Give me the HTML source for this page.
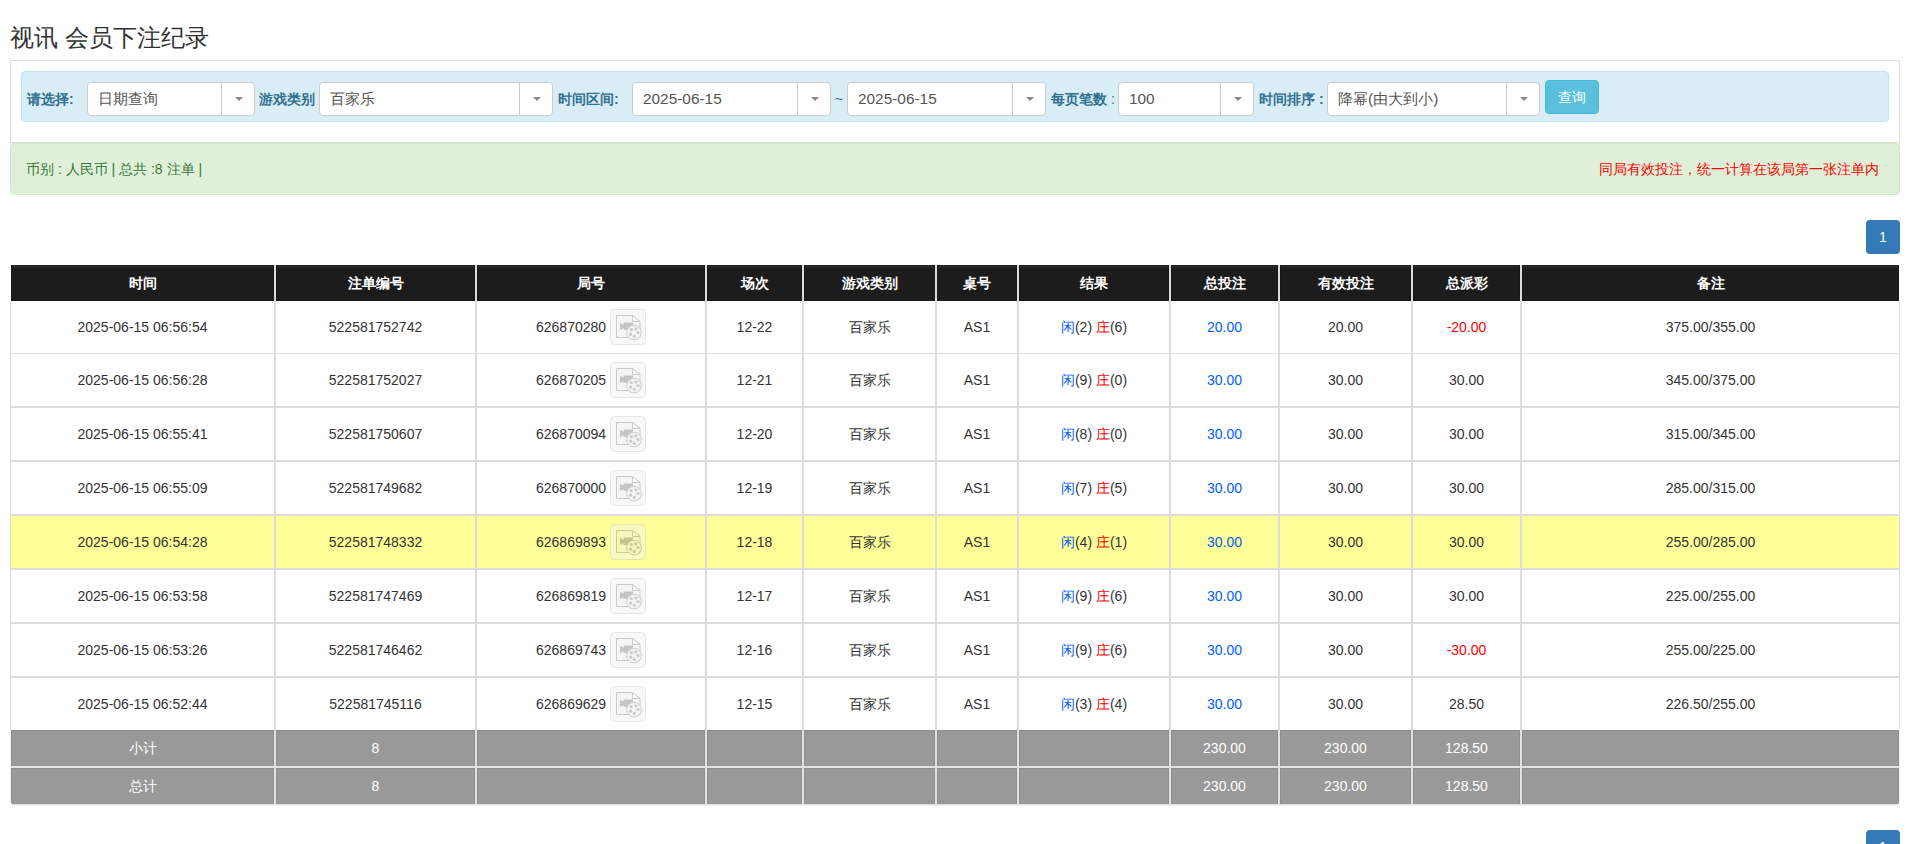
<!DOCTYPE html>
<html><head><meta charset="utf-8"><title>视讯 会员下注纪录</title>
<style>
html,body{margin:0;padding:0;background:#fff;}
body{width:1910px;height:844px;overflow:hidden;position:relative;font-family:"Liberation Sans",sans-serif;color:#333;font-size:14px;}
.abs{position:absolute;}
h3{position:absolute;left:10px;top:23px;margin:0;font-size:24px;font-weight:normal;line-height:30px;color:#333;white-space:nowrap;}
.panel{position:absolute;left:10px;top:60px;width:1888px;height:81px;border:1px solid #ddd;background:#fff;}
.info{position:absolute;left:21px;top:71px;width:1866px;height:49px;border:1px solid #bce8f1;background:#d9edf7;border-radius:4px;}
.lab{position:absolute;top:89px;font-size:14px;font-weight:bold;color:#31708f;line-height:20px;white-space:nowrap;}
.lab i{font-style:normal;font-weight:normal;}
.sel{position:absolute;top:82px;height:32px;border:1px solid #ccc;border-radius:4px;background:#fff;}
.sel .t{position:absolute;left:10px;top:0;line-height:32px;font-size:15.4px;color:#555;white-space:nowrap;}
.sel .dd{position:absolute;right:0;top:0;width:32px;height:32px;border-left:1px solid #ccc;}
.sel .dd:after{content:"";position:absolute;left:13px;top:14px;border-left:4px solid transparent;border-right:4px solid transparent;border-top:4px solid #888;}
.btn{position:absolute;left:1545px;top:80px;width:52px;height:32px;border:1px solid #46b8da;background:#5bc0de;border-radius:4px;color:#fff;font-size:14px;line-height:32px;text-align:center;}
.alert{position:absolute;left:10px;top:143px;width:1888px;height:50px;border:1px solid #d6e9c6;background:#dff0d8;border-radius:4px;}
.alert .l{position:absolute;left:15px;top:0;line-height:50px;font-size:14px;color:#3c763d;white-space:nowrap;}
.alert .rt{position:absolute;right:20px;top:0;line-height:50px;font-size:14px;color:#f00;white-space:nowrap;}
.pg{position:absolute;left:1866px;width:34px;height:34px;background:#337ab7;border-radius:4px;color:#fff;text-align:center;line-height:34px;font-size:14px;}
.th{position:absolute;top:265px;height:34px;line-height:36px;background:linear-gradient(#1e1e1e 0,#2a2a2a 1px,#262626 2px,#1c1c1c 4px);border:1px solid #191919;border-top:0;box-sizing:border-box;height:36px;color:#fff;font-weight:bold;font-size:14px;text-align:center;white-space:nowrap;}
.hsep{position:absolute;top:265px;width:2px;height:36px;background:#dcdcdc;}
.c{position:absolute;text-align:center;white-space:nowrap;font-size:14px;color:#333;}
.c .ic{vertical-align:middle;position:relative;top:-1px;}
.b{color:#0060ff;}
.r{color:#f00;}
.hl{position:absolute;background:#ffff99;}
.bl{position:absolute;background:#dcdcdc;}
.tf{position:absolute;background:#999;border:1px solid #8f8f8f;border-bottom:0;box-sizing:border-box;color:#fff;font-size:14px;text-align:center;white-space:nowrap;}
.fshadow{position:absolute;left:11px;top:730px;width:1888px;height:74px;border-radius:0 0 3px 3px;box-shadow:0 1px 2px rgba(0,0,0,.18);background:#999;}
.fsep{position:absolute;width:2px;background:#e2e2e2;}
</style></head><body>
<h3>视讯 会员下注纪录</h3>
<div class="panel"></div>
<div class="info"></div>
<div class="lab" style="left:27px">请选择:</div>
<div class="sel" style="left:87px;width:166px"><span class="t">日期查询</span><span class="dd"></span></div>
<div class="lab" style="left:259px">游戏类别</div>
<div class="sel" style="left:319px;width:232px"><span class="t">百家乐</span><span class="dd"></span></div>
<div class="lab" style="left:558px">时间区间:</div>
<div class="sel" style="left:632px;width:197px"><span class="t">2025-06-15</span><span class="dd"></span></div>
<div class="lab" style="left:835px"><i>~</i></div>
<div class="sel" style="left:847px;width:197px"><span class="t">2025-06-15</span><span class="dd"></span></div>
<div class="lab" style="left:1051px">每页笔数<i> :</i></div>
<div class="sel" style="left:1118px;width:134px"><span class="t">100</span><span class="dd"></span></div>
<div class="lab" style="left:1259px">时间排序 :</div>
<div class="sel" style="left:1327px;width:211px"><span class="t">降幂(由大到小)</span><span class="dd"></span></div>
<div class="btn">查询</div>
<div class="alert"><span class="l">币别 : 人民币 | 总共 :8 注单 |</span><span class="rt">同局有效投注，统一计算在该局第一张注单内</span></div>
<div class="pg" style="top:220px">1</div>
<div class="th" style="left:11px;width:263px">时间</div>
<div class="th" style="left:276px;width:199px">注单编号</div>
<div class="th" style="left:477px;width:228px">局号</div>
<div class="th" style="left:707px;width:95px">场次</div>
<div class="th" style="left:804px;width:131px">游戏类别</div>
<div class="th" style="left:937px;width:80px">桌号</div>
<div class="th" style="left:1019px;width:150px">结果</div>
<div class="th" style="left:1171px;width:107px">总投注</div>
<div class="th" style="left:1280px;width:131px">有效投注</div>
<div class="th" style="left:1413px;width:107px">总派彩</div>
<div class="th" style="left:1522px;width:377px">备注</div>
<div class="hsep" style="left:274px"></div>
<div class="hsep" style="left:475px"></div>
<div class="hsep" style="left:705px"></div>
<div class="hsep" style="left:802px"></div>
<div class="hsep" style="left:935px"></div>
<div class="hsep" style="left:1017px"></div>
<div class="hsep" style="left:1169px"></div>
<div class="hsep" style="left:1278px"></div>
<div class="hsep" style="left:1411px"></div>
<div class="hsep" style="left:1520px"></div>
<div class="c " style="left:11px;top:301px;width:263px;height:52px;line-height:52px">2025-06-15 06:56:54</div>
<div class="c " style="left:276px;top:301px;width:199px;height:52px;line-height:52px">522581752742</div>
<div class="c " style="left:477px;top:301px;width:228px;height:52px;line-height:52px">626870280 <svg class="ic" width="36" height="36" viewBox="0 0 36 36" style="opacity:.46"><rect x="0.5" y="0.5" width="35" height="35" rx="4" fill="#f0f0f0" stroke="#c9c9c9"/><path d="M6.5 6.5H22.5L30 12.5V28.5H6.5Z" fill="#ebebeb" stroke="#8e8e8e"/><path d="M22.5 6.5V12.5H30Z" fill="#fafafa" stroke="#8e8e8e" stroke-linejoin="round"/><path d="M10 14L14 16V19L10 21Z" fill="#838383"/><rect x="13.5" y="13.5" width="9.5" height="7.5" fill="#838383"/><circle cx="24" cy="23.6" r="7.3" fill="#ebebeb" stroke="#8e8e8e"/><circle cx="21.4" cy="20.6" r="1.6" fill="#8c8c8c"/><circle cx="25.8" cy="19.8" r="1.6" fill="#8c8c8c"/><circle cx="28" cy="23.5" r="1.6" fill="#8c8c8c"/><circle cx="20.6" cy="25.2" r="1.6" fill="#8c8c8c"/><circle cx="24.4" cy="27.3" r="1.6" fill="#8c8c8c"/></svg></div>
<div class="c " style="left:707px;top:301px;width:95px;height:52px;line-height:52px">12-22</div>
<div class="c " style="left:804px;top:301px;width:131px;height:52px;line-height:52px">百家乐</div>
<div class="c " style="left:937px;top:301px;width:80px;height:52px;line-height:52px">AS1</div>
<div class="c " style="left:1019px;top:301px;width:150px;height:52px;line-height:52px"><span class="b">闲</span>(2) <span class="r">庄</span>(6)</div>
<div class="c " style="left:1171px;top:301px;width:107px;height:52px;line-height:52px"><span class="b">20.00</span></div>
<div class="c " style="left:1280px;top:301px;width:131px;height:52px;line-height:52px">20.00</div>
<div class="c " style="left:1413px;top:301px;width:107px;height:52px;line-height:52px"><span class="r">-20.00</span></div>
<div class="c " style="left:1522px;top:301px;width:377px;height:52px;line-height:52px">375.00/355.00</div>
<div class="c " style="left:11px;top:354px;width:263px;height:52px;line-height:52px">2025-06-15 06:56:28</div>
<div class="c " style="left:276px;top:354px;width:199px;height:52px;line-height:52px">522581752027</div>
<div class="c " style="left:477px;top:354px;width:228px;height:52px;line-height:52px">626870205 <svg class="ic" width="36" height="36" viewBox="0 0 36 36" style="opacity:.46"><rect x="0.5" y="0.5" width="35" height="35" rx="4" fill="#f0f0f0" stroke="#c9c9c9"/><path d="M6.5 6.5H22.5L30 12.5V28.5H6.5Z" fill="#ebebeb" stroke="#8e8e8e"/><path d="M22.5 6.5V12.5H30Z" fill="#fafafa" stroke="#8e8e8e" stroke-linejoin="round"/><path d="M10 14L14 16V19L10 21Z" fill="#838383"/><rect x="13.5" y="13.5" width="9.5" height="7.5" fill="#838383"/><circle cx="24" cy="23.6" r="7.3" fill="#ebebeb" stroke="#8e8e8e"/><circle cx="21.4" cy="20.6" r="1.6" fill="#8c8c8c"/><circle cx="25.8" cy="19.8" r="1.6" fill="#8c8c8c"/><circle cx="28" cy="23.5" r="1.6" fill="#8c8c8c"/><circle cx="20.6" cy="25.2" r="1.6" fill="#8c8c8c"/><circle cx="24.4" cy="27.3" r="1.6" fill="#8c8c8c"/></svg></div>
<div class="c " style="left:707px;top:354px;width:95px;height:52px;line-height:52px">12-21</div>
<div class="c " style="left:804px;top:354px;width:131px;height:52px;line-height:52px">百家乐</div>
<div class="c " style="left:937px;top:354px;width:80px;height:52px;line-height:52px">AS1</div>
<div class="c " style="left:1019px;top:354px;width:150px;height:52px;line-height:52px"><span class="b">闲</span>(9) <span class="r">庄</span>(0)</div>
<div class="c " style="left:1171px;top:354px;width:107px;height:52px;line-height:52px"><span class="b">30.00</span></div>
<div class="c " style="left:1280px;top:354px;width:131px;height:52px;line-height:52px">30.00</div>
<div class="c " style="left:1413px;top:354px;width:107px;height:52px;line-height:52px">30.00</div>
<div class="c " style="left:1522px;top:354px;width:377px;height:52px;line-height:52px">345.00/375.00</div>
<div class="c " style="left:11px;top:408px;width:263px;height:52px;line-height:52px">2025-06-15 06:55:41</div>
<div class="c " style="left:276px;top:408px;width:199px;height:52px;line-height:52px">522581750607</div>
<div class="c " style="left:477px;top:408px;width:228px;height:52px;line-height:52px">626870094 <svg class="ic" width="36" height="36" viewBox="0 0 36 36" style="opacity:.46"><rect x="0.5" y="0.5" width="35" height="35" rx="4" fill="#f0f0f0" stroke="#c9c9c9"/><path d="M6.5 6.5H22.5L30 12.5V28.5H6.5Z" fill="#ebebeb" stroke="#8e8e8e"/><path d="M22.5 6.5V12.5H30Z" fill="#fafafa" stroke="#8e8e8e" stroke-linejoin="round"/><path d="M10 14L14 16V19L10 21Z" fill="#838383"/><rect x="13.5" y="13.5" width="9.5" height="7.5" fill="#838383"/><circle cx="24" cy="23.6" r="7.3" fill="#ebebeb" stroke="#8e8e8e"/><circle cx="21.4" cy="20.6" r="1.6" fill="#8c8c8c"/><circle cx="25.8" cy="19.8" r="1.6" fill="#8c8c8c"/><circle cx="28" cy="23.5" r="1.6" fill="#8c8c8c"/><circle cx="20.6" cy="25.2" r="1.6" fill="#8c8c8c"/><circle cx="24.4" cy="27.3" r="1.6" fill="#8c8c8c"/></svg></div>
<div class="c " style="left:707px;top:408px;width:95px;height:52px;line-height:52px">12-20</div>
<div class="c " style="left:804px;top:408px;width:131px;height:52px;line-height:52px">百家乐</div>
<div class="c " style="left:937px;top:408px;width:80px;height:52px;line-height:52px">AS1</div>
<div class="c " style="left:1019px;top:408px;width:150px;height:52px;line-height:52px"><span class="b">闲</span>(8) <span class="r">庄</span>(0)</div>
<div class="c " style="left:1171px;top:408px;width:107px;height:52px;line-height:52px"><span class="b">30.00</span></div>
<div class="c " style="left:1280px;top:408px;width:131px;height:52px;line-height:52px">30.00</div>
<div class="c " style="left:1413px;top:408px;width:107px;height:52px;line-height:52px">30.00</div>
<div class="c " style="left:1522px;top:408px;width:377px;height:52px;line-height:52px">315.00/345.00</div>
<div class="c " style="left:11px;top:462px;width:263px;height:52px;line-height:52px">2025-06-15 06:55:09</div>
<div class="c " style="left:276px;top:462px;width:199px;height:52px;line-height:52px">522581749682</div>
<div class="c " style="left:477px;top:462px;width:228px;height:52px;line-height:52px">626870000 <svg class="ic" width="36" height="36" viewBox="0 0 36 36" style="opacity:.46"><rect x="0.5" y="0.5" width="35" height="35" rx="4" fill="#f0f0f0" stroke="#c9c9c9"/><path d="M6.5 6.5H22.5L30 12.5V28.5H6.5Z" fill="#ebebeb" stroke="#8e8e8e"/><path d="M22.5 6.5V12.5H30Z" fill="#fafafa" stroke="#8e8e8e" stroke-linejoin="round"/><path d="M10 14L14 16V19L10 21Z" fill="#838383"/><rect x="13.5" y="13.5" width="9.5" height="7.5" fill="#838383"/><circle cx="24" cy="23.6" r="7.3" fill="#ebebeb" stroke="#8e8e8e"/><circle cx="21.4" cy="20.6" r="1.6" fill="#8c8c8c"/><circle cx="25.8" cy="19.8" r="1.6" fill="#8c8c8c"/><circle cx="28" cy="23.5" r="1.6" fill="#8c8c8c"/><circle cx="20.6" cy="25.2" r="1.6" fill="#8c8c8c"/><circle cx="24.4" cy="27.3" r="1.6" fill="#8c8c8c"/></svg></div>
<div class="c " style="left:707px;top:462px;width:95px;height:52px;line-height:52px">12-19</div>
<div class="c " style="left:804px;top:462px;width:131px;height:52px;line-height:52px">百家乐</div>
<div class="c " style="left:937px;top:462px;width:80px;height:52px;line-height:52px">AS1</div>
<div class="c " style="left:1019px;top:462px;width:150px;height:52px;line-height:52px"><span class="b">闲</span>(7) <span class="r">庄</span>(5)</div>
<div class="c " style="left:1171px;top:462px;width:107px;height:52px;line-height:52px"><span class="b">30.00</span></div>
<div class="c " style="left:1280px;top:462px;width:131px;height:52px;line-height:52px">30.00</div>
<div class="c " style="left:1413px;top:462px;width:107px;height:52px;line-height:52px">30.00</div>
<div class="c " style="left:1522px;top:462px;width:377px;height:52px;line-height:52px">285.00/315.00</div>
<div class="hl" style="left:11px;top:516px;width:1888px;height:52px"></div>
<div class="c " style="left:11px;top:516px;width:263px;height:52px;line-height:52px">2025-06-15 06:54:28</div>
<div class="c " style="left:276px;top:516px;width:199px;height:52px;line-height:52px">522581748332</div>
<div class="c " style="left:477px;top:516px;width:228px;height:52px;line-height:52px">626869893 <svg class="ic" width="36" height="36" viewBox="0 0 36 36" style="opacity:.46"><rect x="0.5" y="0.5" width="35" height="35" rx="4" fill="#f0f0f0" stroke="#c9c9c9"/><path d="M6.5 6.5H22.5L30 12.5V28.5H6.5Z" fill="#ebebeb" stroke="#8e8e8e"/><path d="M22.5 6.5V12.5H30Z" fill="#fafafa" stroke="#8e8e8e" stroke-linejoin="round"/><path d="M10 14L14 16V19L10 21Z" fill="#838383"/><rect x="13.5" y="13.5" width="9.5" height="7.5" fill="#838383"/><circle cx="24" cy="23.6" r="7.3" fill="#ebebeb" stroke="#8e8e8e"/><circle cx="21.4" cy="20.6" r="1.6" fill="#8c8c8c"/><circle cx="25.8" cy="19.8" r="1.6" fill="#8c8c8c"/><circle cx="28" cy="23.5" r="1.6" fill="#8c8c8c"/><circle cx="20.6" cy="25.2" r="1.6" fill="#8c8c8c"/><circle cx="24.4" cy="27.3" r="1.6" fill="#8c8c8c"/></svg></div>
<div class="c " style="left:707px;top:516px;width:95px;height:52px;line-height:52px">12-18</div>
<div class="c " style="left:804px;top:516px;width:131px;height:52px;line-height:52px">百家乐</div>
<div class="c " style="left:937px;top:516px;width:80px;height:52px;line-height:52px">AS1</div>
<div class="c " style="left:1019px;top:516px;width:150px;height:52px;line-height:52px"><span class="b">闲</span>(4) <span class="r">庄</span>(1)</div>
<div class="c " style="left:1171px;top:516px;width:107px;height:52px;line-height:52px"><span class="b">30.00</span></div>
<div class="c " style="left:1280px;top:516px;width:131px;height:52px;line-height:52px">30.00</div>
<div class="c " style="left:1413px;top:516px;width:107px;height:52px;line-height:52px">30.00</div>
<div class="c " style="left:1522px;top:516px;width:377px;height:52px;line-height:52px">255.00/285.00</div>
<div class="c " style="left:11px;top:570px;width:263px;height:52px;line-height:52px">2025-06-15 06:53:58</div>
<div class="c " style="left:276px;top:570px;width:199px;height:52px;line-height:52px">522581747469</div>
<div class="c " style="left:477px;top:570px;width:228px;height:52px;line-height:52px">626869819 <svg class="ic" width="36" height="36" viewBox="0 0 36 36" style="opacity:.46"><rect x="0.5" y="0.5" width="35" height="35" rx="4" fill="#f0f0f0" stroke="#c9c9c9"/><path d="M6.5 6.5H22.5L30 12.5V28.5H6.5Z" fill="#ebebeb" stroke="#8e8e8e"/><path d="M22.5 6.5V12.5H30Z" fill="#fafafa" stroke="#8e8e8e" stroke-linejoin="round"/><path d="M10 14L14 16V19L10 21Z" fill="#838383"/><rect x="13.5" y="13.5" width="9.5" height="7.5" fill="#838383"/><circle cx="24" cy="23.6" r="7.3" fill="#ebebeb" stroke="#8e8e8e"/><circle cx="21.4" cy="20.6" r="1.6" fill="#8c8c8c"/><circle cx="25.8" cy="19.8" r="1.6" fill="#8c8c8c"/><circle cx="28" cy="23.5" r="1.6" fill="#8c8c8c"/><circle cx="20.6" cy="25.2" r="1.6" fill="#8c8c8c"/><circle cx="24.4" cy="27.3" r="1.6" fill="#8c8c8c"/></svg></div>
<div class="c " style="left:707px;top:570px;width:95px;height:52px;line-height:52px">12-17</div>
<div class="c " style="left:804px;top:570px;width:131px;height:52px;line-height:52px">百家乐</div>
<div class="c " style="left:937px;top:570px;width:80px;height:52px;line-height:52px">AS1</div>
<div class="c " style="left:1019px;top:570px;width:150px;height:52px;line-height:52px"><span class="b">闲</span>(9) <span class="r">庄</span>(6)</div>
<div class="c " style="left:1171px;top:570px;width:107px;height:52px;line-height:52px"><span class="b">30.00</span></div>
<div class="c " style="left:1280px;top:570px;width:131px;height:52px;line-height:52px">30.00</div>
<div class="c " style="left:1413px;top:570px;width:107px;height:52px;line-height:52px">30.00</div>
<div class="c " style="left:1522px;top:570px;width:377px;height:52px;line-height:52px">225.00/255.00</div>
<div class="c " style="left:11px;top:624px;width:263px;height:52px;line-height:52px">2025-06-15 06:53:26</div>
<div class="c " style="left:276px;top:624px;width:199px;height:52px;line-height:52px">522581746462</div>
<div class="c " style="left:477px;top:624px;width:228px;height:52px;line-height:52px">626869743 <svg class="ic" width="36" height="36" viewBox="0 0 36 36" style="opacity:.46"><rect x="0.5" y="0.5" width="35" height="35" rx="4" fill="#f0f0f0" stroke="#c9c9c9"/><path d="M6.5 6.5H22.5L30 12.5V28.5H6.5Z" fill="#ebebeb" stroke="#8e8e8e"/><path d="M22.5 6.5V12.5H30Z" fill="#fafafa" stroke="#8e8e8e" stroke-linejoin="round"/><path d="M10 14L14 16V19L10 21Z" fill="#838383"/><rect x="13.5" y="13.5" width="9.5" height="7.5" fill="#838383"/><circle cx="24" cy="23.6" r="7.3" fill="#ebebeb" stroke="#8e8e8e"/><circle cx="21.4" cy="20.6" r="1.6" fill="#8c8c8c"/><circle cx="25.8" cy="19.8" r="1.6" fill="#8c8c8c"/><circle cx="28" cy="23.5" r="1.6" fill="#8c8c8c"/><circle cx="20.6" cy="25.2" r="1.6" fill="#8c8c8c"/><circle cx="24.4" cy="27.3" r="1.6" fill="#8c8c8c"/></svg></div>
<div class="c " style="left:707px;top:624px;width:95px;height:52px;line-height:52px">12-16</div>
<div class="c " style="left:804px;top:624px;width:131px;height:52px;line-height:52px">百家乐</div>
<div class="c " style="left:937px;top:624px;width:80px;height:52px;line-height:52px">AS1</div>
<div class="c " style="left:1019px;top:624px;width:150px;height:52px;line-height:52px"><span class="b">闲</span>(9) <span class="r">庄</span>(6)</div>
<div class="c " style="left:1171px;top:624px;width:107px;height:52px;line-height:52px"><span class="b">30.00</span></div>
<div class="c " style="left:1280px;top:624px;width:131px;height:52px;line-height:52px">30.00</div>
<div class="c " style="left:1413px;top:624px;width:107px;height:52px;line-height:52px"><span class="r">-30.00</span></div>
<div class="c " style="left:1522px;top:624px;width:377px;height:52px;line-height:52px">255.00/225.00</div>
<div class="c " style="left:11px;top:678px;width:263px;height:52px;line-height:52px">2025-06-15 06:52:44</div>
<div class="c " style="left:276px;top:678px;width:199px;height:52px;line-height:52px">522581745116</div>
<div class="c " style="left:477px;top:678px;width:228px;height:52px;line-height:52px">626869629 <svg class="ic" width="36" height="36" viewBox="0 0 36 36" style="opacity:.46"><rect x="0.5" y="0.5" width="35" height="35" rx="4" fill="#f0f0f0" stroke="#c9c9c9"/><path d="M6.5 6.5H22.5L30 12.5V28.5H6.5Z" fill="#ebebeb" stroke="#8e8e8e"/><path d="M22.5 6.5V12.5H30Z" fill="#fafafa" stroke="#8e8e8e" stroke-linejoin="round"/><path d="M10 14L14 16V19L10 21Z" fill="#838383"/><rect x="13.5" y="13.5" width="9.5" height="7.5" fill="#838383"/><circle cx="24" cy="23.6" r="7.3" fill="#ebebeb" stroke="#8e8e8e"/><circle cx="21.4" cy="20.6" r="1.6" fill="#8c8c8c"/><circle cx="25.8" cy="19.8" r="1.6" fill="#8c8c8c"/><circle cx="28" cy="23.5" r="1.6" fill="#8c8c8c"/><circle cx="20.6" cy="25.2" r="1.6" fill="#8c8c8c"/><circle cx="24.4" cy="27.3" r="1.6" fill="#8c8c8c"/></svg></div>
<div class="c " style="left:707px;top:678px;width:95px;height:52px;line-height:52px">12-15</div>
<div class="c " style="left:804px;top:678px;width:131px;height:52px;line-height:52px">百家乐</div>
<div class="c " style="left:937px;top:678px;width:80px;height:52px;line-height:52px">AS1</div>
<div class="c " style="left:1019px;top:678px;width:150px;height:52px;line-height:52px"><span class="b">闲</span>(3) <span class="r">庄</span>(4)</div>
<div class="c " style="left:1171px;top:678px;width:107px;height:52px;line-height:52px"><span class="b">30.00</span></div>
<div class="c " style="left:1280px;top:678px;width:131px;height:52px;line-height:52px">30.00</div>
<div class="c " style="left:1413px;top:678px;width:107px;height:52px;line-height:52px">28.50</div>
<div class="c " style="left:1522px;top:678px;width:377px;height:52px;line-height:52px">226.50/255.00</div>
<div class="bl" style="left:11px;top:353px;width:1888px;height:1px"></div>
<div class="bl" style="left:11px;top:406px;width:1888px;height:2px"></div>
<div class="bl" style="left:11px;top:460px;width:1888px;height:2px"></div>
<div class="bl" style="left:11px;top:514px;width:1888px;height:2px"></div>
<div class="bl" style="left:11px;top:568px;width:1888px;height:2px"></div>
<div class="bl" style="left:11px;top:622px;width:1888px;height:2px"></div>
<div class="bl" style="left:11px;top:676px;width:1888px;height:2px"></div>
<div class="bl" style="left:274px;top:301px;width:2px;height:429px"></div>
<div class="bl" style="left:475px;top:301px;width:2px;height:429px"></div>
<div class="bl" style="left:705px;top:301px;width:2px;height:429px"></div>
<div class="bl" style="left:802px;top:301px;width:2px;height:429px"></div>
<div class="bl" style="left:935px;top:301px;width:2px;height:429px"></div>
<div class="bl" style="left:1017px;top:301px;width:2px;height:429px"></div>
<div class="bl" style="left:1169px;top:301px;width:2px;height:429px"></div>
<div class="bl" style="left:1278px;top:301px;width:2px;height:429px"></div>
<div class="bl" style="left:1411px;top:301px;width:2px;height:429px"></div>
<div class="bl" style="left:1520px;top:301px;width:2px;height:429px"></div>
<div class="bl" style="left:10px;top:301px;width:1px;height:429px"></div>
<div class="bl" style="left:1899px;top:301px;width:1px;height:429px"></div>
<div class="fshadow"></div>
<div class="tf" style="left:11px;top:730px;width:263px;height:36px;line-height:34px">小计</div>
<div class="tf" style="left:276px;top:730px;width:199px;height:36px;line-height:34px">8</div>
<div class="tf" style="left:477px;top:730px;width:228px;height:36px;line-height:34px"></div>
<div class="tf" style="left:707px;top:730px;width:95px;height:36px;line-height:34px"></div>
<div class="tf" style="left:804px;top:730px;width:131px;height:36px;line-height:34px"></div>
<div class="tf" style="left:937px;top:730px;width:80px;height:36px;line-height:34px"></div>
<div class="tf" style="left:1019px;top:730px;width:150px;height:36px;line-height:34px"></div>
<div class="tf" style="left:1171px;top:730px;width:107px;height:36px;line-height:34px">230.00</div>
<div class="tf" style="left:1280px;top:730px;width:131px;height:36px;line-height:34px">230.00</div>
<div class="tf" style="left:1413px;top:730px;width:107px;height:36px;line-height:34px">128.50</div>
<div class="tf" style="left:1522px;top:730px;width:377px;height:36px;line-height:34px"></div>
<div class="tf" style="border-bottom-left-radius:3px;left:11px;top:768px;width:263px;height:36px;line-height:34px">总计</div>
<div class="tf" style="left:276px;top:768px;width:199px;height:36px;line-height:34px">8</div>
<div class="tf" style="left:477px;top:768px;width:228px;height:36px;line-height:34px"></div>
<div class="tf" style="left:707px;top:768px;width:95px;height:36px;line-height:34px"></div>
<div class="tf" style="left:804px;top:768px;width:131px;height:36px;line-height:34px"></div>
<div class="tf" style="left:937px;top:768px;width:80px;height:36px;line-height:34px"></div>
<div class="tf" style="left:1019px;top:768px;width:150px;height:36px;line-height:34px"></div>
<div class="tf" style="left:1171px;top:768px;width:107px;height:36px;line-height:34px">230.00</div>
<div class="tf" style="left:1280px;top:768px;width:131px;height:36px;line-height:34px">230.00</div>
<div class="tf" style="left:1413px;top:768px;width:107px;height:36px;line-height:34px">128.50</div>
<div class="tf" style="border-bottom-right-radius:3px;left:1522px;top:768px;width:377px;height:36px;line-height:34px"></div>
<div class="fsep" style="left:274px;top:730px;height:74px"></div>
<div class="fsep" style="left:475px;top:730px;height:74px"></div>
<div class="fsep" style="left:705px;top:730px;height:74px"></div>
<div class="fsep" style="left:802px;top:730px;height:74px"></div>
<div class="fsep" style="left:935px;top:730px;height:74px"></div>
<div class="fsep" style="left:1017px;top:730px;height:74px"></div>
<div class="fsep" style="left:1169px;top:730px;height:74px"></div>
<div class="fsep" style="left:1278px;top:730px;height:74px"></div>
<div class="fsep" style="left:1411px;top:730px;height:74px"></div>
<div class="fsep" style="left:1520px;top:730px;height:74px"></div>
<div class="fsep" style="left:11px;top:766px;width:1888px;height:2px"></div>

<div class="pg" style="top:830px">1</div>
</body></html>
